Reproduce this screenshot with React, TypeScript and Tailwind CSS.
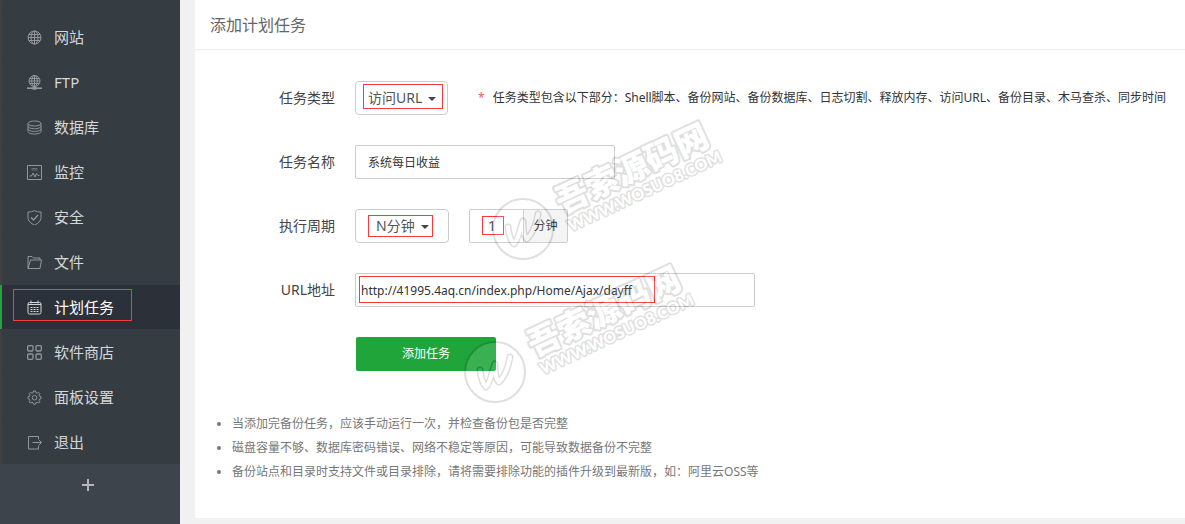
import type { ReactNode } from 'react';

const menu: { title: string; icon: ReactNode; active?: boolean }[] = [
  {
    title: '网站',
    icon: (
      <>
        <circle cx="7.5" cy="7.5" r="6.5" />
        <ellipse cx="7.5" cy="7.5" rx="3.5" ry="6.5" />
        <path d="M7.5 1v13M1 7.5h13M2 4.5h11M2 10.5h11" />
      </>
    ),
  },
  {
    title: 'FTP',
    icon: (
      <>
        <circle cx="7.5" cy="6" r="5.5" />
        <ellipse cx="7.5" cy="6" rx="2.8" ry="5.5" />
        <path d="M7.5 .5v11M2 6h11M3 3.5h9M3 8.5h9" />
        <path d="M0 13.2h15" strokeWidth="1.6" />
        <path d="M5.5 13.2h4" strokeWidth="3" />
      </>
    ),
  },
  {
    title: '数据库',
    icon: (
      <>
        <ellipse cx="7.5" cy="3.5" rx="6.5" ry="2.5" />
        <path d="M1 3.5v8c0 1.4 2.9 2.5 6.5 2.5s6.500-1.100 6.500-2.500v-8" />
        <path d="M1 6.200c0 1.400 2.900 2.500 6.500 2.500s6.500-1.100 6.500-2.500M1 8.900c0 1.400 2.900 2.500 6.500 2.500s6.500-1.100 6.500-2.500" />
      </>
    ),
  },
  {
    title: '监控',
    icon: (
      <>
        <path d="M.5 .5h14v14H.5z" />
        <path d="M4.5 3.500h6M4.500 5h6" opacity=".6" />
        <path d="M2.500 11h2l1.500-3 2 4 1.500-3.500 1.500 2h1.500" />
      </>
    ),
  },
  {
    title: '安全',
    icon: (
      <>
        <path d="M7.5 .5c2 1.200 4 1.500 6.500 1.500v5.500c0 3.500-3 6-6.500 7.500C4 13.500 1 11 1 7.500V2C3.500 2 5.500 1.700 7.500 .500z" />
        <path d="M4 7.500l2.500 2.500 4.500-5" strokeWidth="1.300" />
      </>
    ),
  },
  {
    title: '文件',
    icon: (
      <path d="M1 13.500V1.500h4l1.500 1.500h6.500V5M1 13.500l2.500-8.500h11l-1.500 8.500z" strokeLinejoin="round" />
    ),
  },
  {
    title: '计划任务',
    active: true,
    icon: (
      <>
        <rect x="1" y="2.500" width="13" height="11.500" rx="1.500" />
        <path d="M1 4.500h13M4 .500v3M11 .500v3" />
        <path d="M3.500 7.500h8M3.500 9.500h8M3.500 11.500h8" strokeDasharray="2 1" />
      </>
    ),
  },
  {
    title: '软件商店',
    icon: (
      <g strokeWidth="1.300">
        <rect x=".7" y=".7" width="5.300" height="5.300" rx="1" />
        <rect x="9" y=".7" width="5.300" height="5.300" rx="1" />
        <rect x=".7" y="9" width="5.300" height="5.300" rx="1" />
        <rect x="9" y="9" width="5.300" height="5.300" rx="1" />
      </g>
    ),
  },
  {
    title: '面板设置',
    icon: (
      <>
        <path
          d="M6.500 1h2l.4 1.700 1.200.5 1.500-.9 1.300 1.300-.9 1.500.5 1.200 1.500.4v2l-1.500.4-.5 1.200.9 1.500-1.300 1.300-1.500-.9-1.200.5-.4 1.500h-2l-.4-1.500-1.200-.5-1.500.9-1.300-1.300.9-1.500-.5-1.200L1 8.700v-2l1.500-.4.5-1.200-.9-1.500 1.300-1.300 1.500.9 1.200-.5z"
          strokeLinejoin="round"
        />
        <circle cx="7.500" cy="7.700" r="2.300" />
      </>
    ),
  },
  {
    title: '退出',
    icon: <path d="M11.500 4V1.500h-10v12.500h10V11M5.500 7.500h9M11.500 4.500l3 3-3 3" />,
  },
];

const tips = [
  '当添加完备份任务，应该手动运行一次，并检查备份包是否完整',
  '磁盘容量不够、数据库密码错误、网络不稳定等原因，可能导致数据备份不完整',
  '备份站点和目录时支持文件或目录排除，请将需要排除功能的插件升级到最新版，如：阿里云OSS等',
];

// Red frame drawn over the fields to fill in
function Mark({ className }: { className: string }) {
  return <span className={`pointer-events-none absolute border border-[#f83a3a] ${className}`} />;
}

function Caret({ className }: { className: string }) {
  return (
    <svg className={`pointer-events-none absolute top-4 h-1 w-2 fill-[#444] ${className}`} viewBox="0 0 8 4">
      <path d="M0 0h8L4 4z" />
    </svg>
  );
}

function Row({ id, label, children }: { id: string; label: string; children: ReactNode }) {
  return (
    <div className="flex items-center gap-5">
      <label htmlFor={id} className="w-[140px] shrink-0 text-right text-sm text-[#444]">
        {label}
      </label>
      {children}
    </div>
  );
}

function Watermark({ className }: { className: string }) {
  return (
    <svg
      className={`pointer-events-none absolute h-[150px] w-[260px] opacity-12 ${className}`}
      viewBox="0 0 260 150"
      aria-hidden="true"
    >
      <circle cx="33" cy="114" r="30" fill="#fff" stroke="#000" strokeWidth="2" />
      <g fill="none" strokeLinecap="round" strokeLinejoin="round">
        <path d="M18 112c1 8 3 14 6 17c4-3 6-16 9-23c0 8 1 16 4 18c4-4 9-13 11-25" stroke="#000" strokeWidth="7" />
        <path d="M18 112c1 8 3 14 6 17c4-3 6-16 9-23c0 8 1 16 4 18c4-4 9-13 11-25" stroke="#fff" strokeWidth="4" />
      </g>
      <g
        transform="rotate(-25 76 96)"
        className="font-['Noto_Sans_CJK_SC',sans-serif] font-black"
        fill="#fff"
        stroke="#000"
        strokeLinejoin="round"
        paintOrder="stroke"
      >
        <text x="71" y="97" fontSize="33" strokeWidth="4">
          吾索源码网
        </text>
        <text x="72" y="117" fontSize="16" strokeWidth="3" className="font-['Lato',sans-serif]">
          WWW.WOSUO8.COM
        </text>
      </g>
    </svg>
  );
}

export default function App() {
  return (
    <div className="flex min-h-screen bg-[#f1f1f1] font-['Noto_Sans','Noto_Sans_CJK_SC',sans-serif] text-xs text-[#333]">
      {/* Sidebar */}
      <aside className="w-[180px] shrink-0 bg-[#3e444c]">
        <nav className="bg-[#353c42]">
          <div className="mb-px h-3.5 border-l-2 border-[#433f3d]" />
          <ul className="flex flex-col gap-px">
            {menu.map((item) => (
              <li key={item.title} className="relative">
                <a
                  href="#"
                  className={`flex h-11 items-center gap-3 border-l-2 pl-[25px] text-[15px] ${
                    item.active
                      ? 'border-[#20a53a] bg-[#2c3038] text-white'
                      : 'border-[#433f3d] text-[#d6d7d9]'
                  }`}
                >
                  <svg
                    className={`size-[15px] fill-none ${item.active ? 'stroke-[#d4d6d8]' : 'stroke-[#94979a]'}`}
                    viewBox="0 0 15 15"
                  >
                    {item.icon}
                  </svg>
                  {item.title}
                </a>
                {item.active && <Mark className="top-1 left-[13px] h-8 w-[119px]" />}
              </li>
            ))}
          </ul>
        </nav>
        <button type="button" aria-label="+" className="flex h-[42px] w-full items-center justify-center pr-1">
          <svg className="size-3 stroke-[#b4b6b9]" viewBox="0 0 12 12" strokeWidth="2">
            <path d="M6 0v12M0 6h12" />
          </svg>
        </button>
      </aside>

      {/* Content */}
      <main className="relative mb-1.5 ml-[15px] min-w-0 flex-1 bg-white">
        <h1 className="border-b border-[#eee] px-[15px] pt-[13px] pb-[11px] text-base leading-[25px] text-[#666]">
          添加计划任务
        </h1>

        <form className="flex flex-col gap-[30px] pt-[31px]">
          <Row id="type" label="任务类型">
            <div className="relative">
              <select
                id="type"
                className="h-[34px] w-[93px] appearance-none rounded border border-[#ccc] bg-white pl-3 text-sm text-[#555]"
              >
                <option>访问URL</option>
              </select>
              <Caret className="right-3" />
              <Mark className="top-[3px] left-2 h-[25px] w-20" />
            </div>
            <p className="ml-2.5 whitespace-nowrap">
              <span className="mr-2 text-[#f55]">*</span>
              任务类型包含以下部分：Shell脚本、备份网站、备份数据库、日志切割、释放内存、访问URL、备份目录、木马查杀、同步时间
            </p>
          </Row>

          <Row id="name" label="任务名称">
            <input
              id="name"
              type="text"
              defaultValue="系统每日收益"
              className="h-[34px] w-[260px] rounded-xs border border-[#ccc] px-3"
            />
          </Row>

          <Row id="cycle" label="执行周期">
            <div className="relative">
              <select
                id="cycle"
                className="h-[34px] w-[94px] appearance-none rounded border border-[#ccc] bg-white pl-5 text-sm text-[#555]"
              >
                <option>N分钟</option>
              </select>
              <Caret className="right-5" />
              <Mark className="top-1.5 left-[13px] h-[22px] w-[65px]" />
            </div>
            <div className="relative flex h-[34px] overflow-hidden rounded-xs border border-[#ccc]">
              <input
                type="text"
                aria-label="分钟"
                defaultValue="1"
                className="w-[53px] pl-[18px] text-sm text-[#555]"
              />
              <span className="flex w-11 items-center justify-center border-l border-[#ccc] bg-[#f4f4f4]">分钟</span>
              <Mark className="top-1.5 left-3 h-[19px] w-[22px]" />
            </div>
          </Row>

          <Row id="url" label="URL地址">
            <div className="relative">
              <input
                id="url"
                type="text"
                defaultValue="http://41995.4aq.cn/index.php/Home/Ajax/dayff"
                className="h-[34px] w-[400px] rounded-xs border border-[#ccc] px-[5px]"
              />
              <Mark className="top-[3px] left-1 h-[27px] w-[296px]" />
            </div>
          </Row>

          <button type="button" className="ml-[161px] h-[34px] w-[140px] rounded-xs bg-[#20a53a] text-white">
            添加任务
          </button>
        </form>

        <ul className="mt-[41px] list-disc pr-4 pb-[34px] pl-[37px] leading-6 text-[#777]">
          {tips.map((tip) => (
            <li key={tip}>{tip}</li>
          ))}
        </ul>

        <Watermark className="top-[115px] left-[295px]" />
        <Watermark className="top-[258px] left-[267px]" />
      </main>
    </div>
  );
}
